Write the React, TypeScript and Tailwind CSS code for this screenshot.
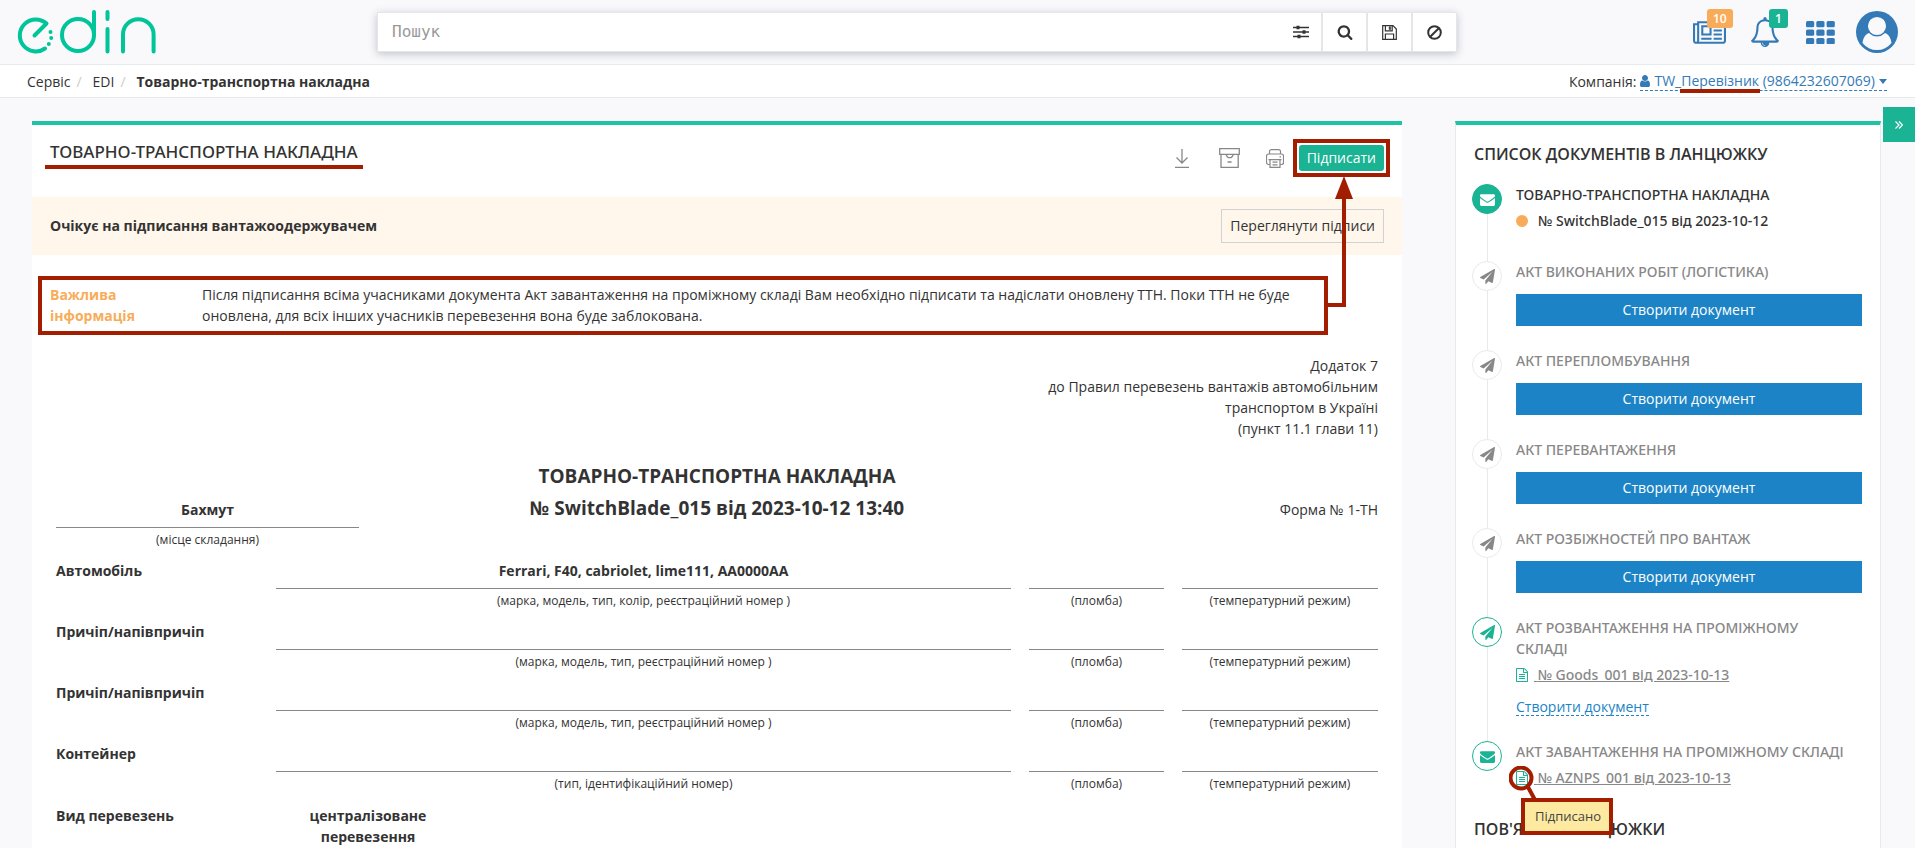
import React from "react";
import type { ReactNode } from "react";

type IconProps = { className?: string };

const Fa = ({ d, box = "0 0 1792 1792", className = "" }: IconProps & { d: string; box?: string }) => (
  <svg viewBox={box} className={className} fill="currentColor" aria-hidden="true">
    <path d={d} />
  </svg>
);

const P = {
  bell: "M912 1696q0-16-16-16-59 0-101.5-42.5t-42.5-101.5q0-16-16-16t-16 16q0 73 51.5 124.5t124.5 51.5q16 0 16-16zm-666-288h1300q-266-300-266-832 0-51-24-105t-69-103-121.5-80.5-169.5-31.5-169.5 31.5-121.5 80.5-69 103-24 105q0 532-266 832zm1482 0q0 52-38 90t-90 38h-448q0 106-75 181t-181 75-181-75-75-181h-448q-52 0-90-38t-38-90q50-42 91-88t85-119.5 74.5-158.5 50-206 19.5-260q0-152 117-282.5t307-158.5q-8-19-8-39 0-40 28-68t68-28 68 28 28 68q0 20-8 39 190 28 307 158.5t117 282.5q0 139 19.5 260t50 206 74.5 158.5 85 119.5 91 88z",
  news: "M1024 512h-384v384h384v-384zm128 640v128h-640v-128h640zm0-768v640h-640v-640h640zm640 768v128h-512v-128h512zm0-256v128h-512v-128h512zm0-256v128h-512v-128h512zm0-256v128h-512v-128h512zm-1536 960v-960h-128v960q0 26 19 45t45 19 45-19 19-45zm1664 0v-1088h-1536v1088q0 33-11 64h1483q26 0 45-19t19-45zm128-1216v1216q0 80-56 136t-136 56h-1664q-80 0-136-56t-56-136v-1088h256v-128h1792z",
  file: "M1596 380q28 28 48 76t20 88v1152q0 40-28 68t-68 28h-1344q-40 0-68-28t-28-68v-1600q0-40 28-68t68-28h896q40 0 88 20t76 48zm-444-244v376h376q-10-29-22-41l-313-313q-12-12-41-22zm384 1528v-1024h-416q-40 0-68-28t-28-68v-416h-768v1536h1280zm-1024-864q0-14 9-23t23-9h704q14 0 23 9t9 23v64q0 14-9 23t-23 9h-704q-14 0-23-9t-9-23v-64zm736 224q14 0 23 9t9 23v64q0 14-9 23t-23 9h-704q-14 0-23-9t-9-23v-64q0-14 9-23t23-9h704zm0 256q14 0 23 9t9 23v64q0 14-9 23t-23 9h-704q-14 0-23-9t-9-23v-64q0-14 9-23t23-9h704z",
  plane: "M1764 11q33 24 27 64l-256 1536q-5 29-32 45-14 8-31 8-11 0-24-5l-453-185-242 295q-18 23-49 23-13 0-22-4-19-7-30.5-23.5t-11.5-36.5v-349l864-1059-1069 925-395-162q-37-14-40-55-2-40 32-59l1664-960q15-9 32-9 20 0 36 11z",
  mail: "M1792 710v794q0 66-47 113t-113 47h-1472q-66 0-113-47t-47-113v-794q44 49 101 87 362 246 497 345 57 42 92.5 65.5t94.5 48 110 24.5h2q51 0 110-24.5t94.5-48 92.5-65.5q170-123 498-345 57-39 100-87zm0-294q0 79-49 151t-122 123q-376 261-468 325-10 7-42.5 31t-54 38.5-52 32.5-57.5 27-50 9h-2q-23 0-50-9t-57.5-27-52-32.5-54-38.5-42.5-31q-91-64-262-182.5t-205-142.5q-62-42-117-115.5t-55-136.5q0-78 41.5-130t118.5-52h1472q65 0 112.5 47t47.5 113z",
  user: "M1536 1399q0 109-62.5 187t-150.5 78h-854q-88 0-150.5-78t-62.5-187q0-85 8.5-160.5t31.5-152 58.5-131 94-89 134.5-34.5q131 128 313 128t313-128q76 0 134.5 34.5t94 89 58.5 131 31.5 152 8.5 160.5zm-256-887q0 159-112.5 271.5t-271.5 112.5-271.5-112.5-112.5-271.5 112.5-271.5 271.5-112.5 271.5 112.5 112.5 271.5z",
  search: "M1216 832q0-185-131.5-316.5t-316.5-131.5-316.5 131.5-131.5 316.5 131.5 316.5 316.5 131.5 316.5-131.5 131.5-316.5zm512 832q0 52-38 90t-90 38q-54 0-90-38l-343-342q-179 124-399 124-143 0-273.5-55.5t-225-150-150-225-55.5-273.5 55.5-273.5 150-225 225-150 273.5-55.5 273.5 55.5 225 150 150 225 55.5 273.5q0 220-124 399l343 343q37 37 37 90z",
};

const Logo = () => (
  <svg viewBox="0 0 140 46" className="h-[46px] w-[140px]" fill="none" stroke="#00c49a" strokeWidth="4" strokeLinecap="round" role="img" aria-label="edin">
    <path d="M17.5 26.5 L29.5 14.5 A16 16 0 1 0 28 39.5" strokeLinejoin="round" />
    <circle cx="61" cy="26" r="16" />
    <path d="M77 26V3M90.500 3v7M90.500 20v22.500M106 42.500V25.500a15.300 15.300 0 0 1 30.600 0V42.500" />
    <g fill="#00c49a" stroke="none">
      <circle cx="33.500" cy="23" r="2" />
      <circle cx="34.200" cy="29" r="2" />
      <circle cx="31.800" cy="35" r="2" />
    </g>
  </svg>
);

const Tune = () => (
  <svg viewBox="0 0 16 14" className="h-[14px] w-4" stroke="currentColor" strokeWidth="1.3" fill="none" aria-hidden="true">
    <path d="M0 2.500h16M0 7h16M0 11.500h16" />
    <path d="M5 .700v3.600M11 5.200v3.600M6 9.700v3.600" strokeWidth="3" />
  </svg>
);
const Floppy = () => (
  <svg viewBox="0 0 15 15" className="size-[15px]" stroke="currentColor" strokeWidth="1.200" fill="none" aria-hidden="true">
    <path d="M.7.7h10.300L14.300 4v10.300H.7zM3.400 14V9h8.200v5M3.400.8v5h6.800v-5" />
    <path d="M7.200 1.800h1.400v2.800H7.200z" fill="currentColor" strokeWidth=".6" />
  </svg>
);
const Ban = () => (
  <svg viewBox="0 0 15 15" className="size-[15px]" stroke="currentColor" strokeWidth="2" fill="none" aria-hidden="true">
    <circle cx="7.500" cy="7.500" r="6.300" />
    <path d="M3.200 11.800L11.800 3.200" />
  </svg>
);
const Grid = () => (
  <svg viewBox="0 0 29 23" className="h-[23px] w-[29px]" fill="currentColor" aria-hidden="true">
    {[0, 8.5, 17].map((y) =>
      [0, 10.3, 20.6].map((x) => <rect key={`${x}-${y}`} x={x} y={y} width="8.200" height="6.200" rx="1.500" />)
    )}
  </svg>
);
const Avatar = () => (
  <svg viewBox="0 0 42 42" className="size-[42px]" aria-hidden="true">
    <circle cx="21" cy="21" r="21" fill="#337ab7" />
    <path d="M6.500 32C7.200 26.500 9.500 23 14 21.500a11 11 0 0 0 14 0c4.500 1.500 6.800 5 7.500 10.500A18.500 18.500 0 0 1 6.500 32z" fill="#f9f9fb" />
    <circle cx="21" cy="15" r="9.800" fill="#f9f9fb" stroke="#337ab7" strokeWidth="1.500" />
  </svg>
);
const Download = () => (
  <svg viewBox="0 0 14 19" className="h-[19px] w-[14px]" stroke="currentColor" fill="none" aria-hidden="true">
    <path d="M7 0v14M1.500 8.500L7 14l5.500-5.500M0 18.300h14" strokeWidth="1.300" />
  </svg>
);
const Archive = () => (
  <svg viewBox="0 0 21 20" className="h-5 w-[21px]" stroke="currentColor" fill="none" strokeWidth="1.300" aria-hidden="true">
    <path d="M.7.7h19.600v5.600H.7zM2 6.300v13h17.200v-13M7.500 6.500v1.200l1.700 1.900h3l1.700-1.900V6.500M8.600 14h4" />
  </svg>
);
const Printer = () => (
  <svg viewBox="0 0 18 19" className="h-[19px] w-[18px]" stroke="currentColor" fill="none" strokeWidth="1.200" aria-hidden="true">
    <path d="M3.500 5V2.600a2 2 0 0 1 2-2h7a2 2 0 0 1 2 2V5M4 15.500H2.500a2 2 0 0 1-2-2V7a2 2 0 0 1 2-2h13a2 2 0 0 1 2 2v6.500a2 2 0 0 1-2 2H14M4 10.600h10v7.800H4zM2.500 10.600h13M6.500 13.200h5M6.500 15.800h5M13.500 7.800h1.500" />
  </svg>
);

const SearchButton = ({ label, children }: { label: string; children: ReactNode }) => (
  <button type="button" aria-label={label} className="flex w-[45px] items-center justify-center border-l-2 border-[#e5e6e7]">
    {children}
  </button>
);

const Header = () => (
  <header className="flex h-[65px] items-center border-b border-[#e7eaec] px-[17px]">
    <a href="#home" className="w-[360px] shrink-0">
      <Logo />
    </a>
    <form className="flex h-10 w-[1080px] min-w-0 border border-[#e5e6e7] bg-white shadow-[0_2px_8px_rgba(60,70,110,0.3)]">
      <input
        type="search"
        aria-label="Пошук"
        placeholder="Пошук"
        className="min-w-0 flex-1 px-[14px] font-['DejaVu_Sans_Mono',monospace] text-base outline-none placeholder:text-[#999]"
      />
      <button type="button" aria-label="Фільтри" className="flex w-10 items-center justify-center">
        <Tune />
      </button>
      <SearchButton label="Знайти">
        <Fa d={P.search} className="size-4" />
      </SearchButton>
      <SearchButton label="Зберегти">
        <Floppy />
      </SearchButton>
      <SearchButton label="Очистити">
        <Ban />
      </SearchButton>
    </form>
    <nav className="ml-auto flex items-center text-[#337ab7]">
      <a href="#news" aria-label="Новини" className="relative">
        <Fa d={P.news} box="0 128 2048 1408" className="h-[23px] w-[33px]" />
        <span className="absolute -top-[12px] left-[14px] rounded-[3px] bg-[#f8ac59] px-[6px] text-xs leading-[19px] font-semibold text-white">10</span>
      </a>
      <a href="#alerts" aria-label="Сповіщення" className="relative ml-6">
        <Fa d={P.bell} className="size-[30px]" />
        <span className="absolute -top-[8px] left-[19px] rounded-[3px] bg-[#1ab394] px-[6px] text-xs leading-[19px] font-semibold text-white">1</span>
      </a>
      <a href="#apps" aria-label="Сервіси" className="ml-[26px]">
        <Grid />
      </a>
      <a href="#profile" aria-label="Профіль" className="ml-[21px]">
        <Avatar />
      </a>
    </nav>
  </header>
);

const Breadcrumbs = () => (
  <div className="flex h-[33px] items-center justify-between border-b border-[#e7eaec] bg-white pt-px pr-7 pl-[27px]">
    <nav className="flex items-center">
      <a href="#service">Сервіс</a>
      <span className="w-[22px] pl-[6px] text-[#ccc]">/</span>
      <a href="#edi">EDI</a>
      <span className="w-[22px] pl-[6px] text-[#ccc]">/</span>
      <strong>Товарно-транспортна накладна</strong>
    </nav>
    <div className="flex items-center gap-1">
      <span>Компанія:</span>
      <a href="#company" className="flex items-center border-b border-dashed border-[#337ab7] leading-[18px] text-[#337ab7]">
        <Fa d={P.user} box="256 128 1280 1536" className="mr-1 h-3 w-[10px]" />
        TW_
        <span className="relative">
          Перевізник
          <span className="absolute -inset-x-px -bottom-[3px] h-1 bg-[#a31e00]" />
        </span>
        &nbsp;(9864232607069)
        <svg viewBox="0 0 8 5" className="ml-1 h-[5px] w-2" fill="currentColor" aria-hidden="true">
          <path d="M0 0h8L4 5z" />
        </svg>
      </a>
    </div>
  </div>
);

const Caption = ({ children }: { children: ReactNode }) => <p className="pt-[3px] text-center text-xs leading-[18px]">{children}</p>;

const Line = ({ value, caption }: { value?: string; caption: string }) => (
  <div>
    <p className="h-8 border-b border-[#888] pt-[3px] text-center font-bold leading-[21px]">{value}</p>
    <Caption>{caption}</Caption>
  </div>
);

const vehicles = [
  { label: "Автомобіль", value: "Ferrari, F40, cabriolet, lime111, AA0000AA", caption: "(марка, модель, тип, колір, реєстраційний номер )" },
  { label: "Причіп/напівпричіп", caption: "(марка, модель, тип, реєстраційний номер )" },
  { label: "Причіп/напівпричіп", caption: "(марка, модель, тип, реєстраційний номер )" },
  { label: "Контейнер", caption: "(тип, ідентифікаційний номер)" },
];

const Waybill = () => (
  <div className="px-6 pt-5 pb-8">
    <p className="ml-auto w-[345px] text-right leading-[21px]">
      Додаток 7<br />
      до Правил перевезень вантажів автомобільним транспортом в Україні
      <br />
      (пункт 11.1 глави 11)
    </p>
    <div className="mt-[21px] grid grid-cols-[303px_1fr_303px] gap-[18px]">
      <div className="pt-[34px]">
        <p className="h-[34px] border-b border-[#888] pt-[5px] text-center font-bold leading-[21px]">Бахмут</p>
        <Caption>(місце складання)</Caption>
      </div>
      <h2 className="text-center text-[19px] leading-8 font-bold">
        ТОВАРНО-ТРАНСПОРТНА НАКЛАДНА
        <br />№ SwitchBlade_015 від 2023-10-12 13:40
      </h2>
      <p className="pt-[39px] text-right leading-[21px]">Форма № 1-ТН</p>
    </div>
    <div className="mt-2 flex flex-col gap-2">
      {vehicles.map((v, i) => (
        <div key={i} className="grid grid-cols-[202px_1fr_135px_196px] gap-[18px]">
          <p className="pt-[3px] font-bold leading-[21px]">{v.label}</p>
          <Line value={v.value} caption={v.caption} />
          <Line caption="(пломба)" />
          <Line caption="(температурний режим)" />
        </div>
      ))}
      <div className="grid grid-cols-[202px_184px] gap-[18px] pt-1 font-bold leading-[21px]">
        <p>Вид перевезень</p>
        <p className="text-center">централізоване перевезення</p>
      </div>
    </div>
  </div>
);

const MainPanel = () => (
  <main className="relative min-w-0 flex-1 border-t-4 border-[#20c3a3] bg-white">
    <div className="flex h-[72px] items-start justify-between px-[18px]">
      <h1 className="relative pt-[15px] font-['Noto_Sans',sans-serif] text-[17px] leading-6 font-medium">
        ТОВАРНО-ТРАНСПОРТНА НАКЛАДНА
        <span className="absolute -inset-x-[5px] -bottom-[5px] h-1 bg-[#a31e00]" />
      </h1>
      <div className="flex items-center pt-5 text-[#888]">
        <button type="button" aria-label="Завантажити" className="mr-[30px]">
          <Download />
        </button>
        <button type="button" aria-label="Архівувати" className="mr-[26px]">
          <Archive />
        </button>
        <button type="button" aria-label="Друкувати" className="mr-[15px]">
          <Printer />
        </button>
        <button type="button" className="relative h-[26px] rounded-[3px] bg-[#1ab394] px-2 text-white">
          Підписати
          <span className="absolute -inset-[6px] border-4 border-[#a31e00]" />
        </button>
      </div>
    </div>
    <div className="flex h-[58px] items-center justify-between bg-[#fff6ec] px-[18px]">
      <strong>Очікує на підписання вантажоодержувачем</strong>
      <button type="button" className="h-[34px] border border-[#d2d2d2] px-2">
        Переглянути підписи
      </button>
    </div>
    <section className="mt-[21px] mr-[74px] ml-[6px] flex border-4 border-[#a31e00] pt-1 pb-[5px] pl-2 leading-[21px]">
      <strong className="w-[152px] shrink-0 pr-10 text-[#f8ac59]">Важлива інформація</strong>
      <p>
        Після підписання всіма учасниками документа Акт завантаження на проміжному складі Вам необхідно підписати та надіслати оновлену ТТН. Поки ТТН не
        буде оновлена, для всіх інших учасників перевезення вона буде заблокована.
      </p>
    </section>
    <svg viewBox="0 0 26 132" className="pointer-events-none absolute top-[51px] right-[49px] h-[132px] w-[26px]" aria-hidden="true">
      <path d="M0 129H17V20" fill="none" stroke="#a31e00" strokeWidth="4" />
      <path d="M17 0L26 23H8z" fill="#a31e00" />
    </svg>
    <Waybill />
  </main>
);

type Doc = {
  title: string;
  icon: "mail" | "plane";
  tone: "solid" | "muted" | "active";
  children: ReactNode;
};

const toneClass = {
  solid: "border-[#1ab394] bg-[#1ab394] text-white",
  muted: "border-[#e7eaec] bg-white text-[#888]",
  active: "border-[#1ab394] bg-white text-[#1ab394]",
};

const CreateButton = () => (
  <button type="button" className="mt-3 mb-6 block h-8 w-full bg-[#1c84c6] text-center text-white">
    Створити документ
  </button>
);

const DocLink = ({ children, note }: { children: ReactNode; note?: boolean }) => (
  <div className="mt-[5px] flex h-[22px] items-center font-['Noto_Sans',sans-serif] font-medium text-[#888]">
    <span className="relative mr-[6px]">
      <Fa d={P.file} box="128 0 1536 1792" className="h-[14px] w-3 text-[#1ab394]" />
      {note && (
        <span className="absolute -top-[5px] -left-[7px] h-0 w-0">
          <svg viewBox="0 0 40 40" className="h-10 w-10" fill="none" stroke="#a31e00" strokeWidth="4" aria-hidden="true">
            <circle cx="12" cy="12" r="10.500" />
            <path d="M19 21L26 34" />
          </svg>
          <span className="absolute top-8 left-3 border-4 border-[#a31e00] bg-[#fdeaa0] pr-2 pl-[10px] font-['Open_Sans',sans-serif] text-[13px] leading-[29px] font-normal text-[#444]">
            Підписано
          </span>
        </span>
      )}
    </span>
    <a href="#doc" className="whitespace-pre underline">
      {" "}
      {children}
    </a>
  </div>
);

const docs: Doc[] = [
  {
    title: "ТОВАРНО-ТРАНСПОРТНА НАКЛАДНА",
    icon: "mail",
    tone: "solid",
    children: (
      <p className="mt-[5px] mb-[29px] flex h-[22px] items-center font-['Noto_Sans',sans-serif] font-medium">
        <span className="mr-[10px] size-3 rounded-full bg-[#f8ac59]" />№ SwitchBlade_015 від 2023-10-12
      </p>
    ),
  },
  { title: "АКТ ВИКОНАНИХ РОБІТ (ЛОГІСТИКА)", icon: "plane", tone: "muted", children: <CreateButton /> },
  { title: "АКТ ПЕРЕПЛОМБУВАННЯ", icon: "plane", tone: "muted", children: <CreateButton /> },
  { title: "АКТ ПЕРЕВАНТАЖЕННЯ", icon: "plane", tone: "muted", children: <CreateButton /> },
  { title: "АКТ РОЗБІЖНОСТЕЙ ПРО ВАНТАЖ", icon: "plane", tone: "muted", children: <CreateButton /> },
  {
    title: "АКТ РОЗВАНТАЖЕННЯ НА ПРОМІЖНОМУ СКЛАДІ",
    icon: "plane",
    tone: "active",
    children: (
      <>
        <DocLink>№ Goods_001 від 2023-10-13</DocLink>
        <a href="#create" className="mt-[12px] mb-[25px] inline-block border-b border-dashed border-[#1c84c6] leading-[17px] text-[#1c84c6]">
          Створити документ
        </a>
      </>
    ),
  },
  { title: "АКТ ЗАВАНТАЖЕННЯ НА ПРОМІЖНОМУ СКЛАДІ", icon: "mail", tone: "active", children: <DocLink note>№ AZNPS_001 від 2023-10-13</DocLink> },
];

const SidePanel = () => (
  <aside className="w-[426px] shrink-0 border-x border-t-4 border-[#e7eaec] border-t-[#20c3a3] bg-white pr-[18px] pb-8 pl-4">
    <h2 className="pt-[17px] pl-[2px] text-base leading-6 font-semibold">СПИСОК ДОКУМЕНТІВ В ЛАНЦЮЖКУ</h2>
    <ol className="pt-[18px]">
      {docs.map((doc, i) => (
        <li key={doc.title} className="flex gap-[14px]">
          <div className="flex flex-col items-center">
            <span className={`flex size-[30px] shrink-0 items-center justify-center rounded-full border ${toneClass[doc.tone]}`}>
              <Fa d={P[doc.icon]} className="size-[15px]" />
            </span>
            {i < docs.length - 1 && <span className="w-px flex-1 bg-[#e7eaec]" />}
          </div>
          <div className="min-w-0 flex-1">
            <h3 className={`pr-3 font-['Noto_Sans',sans-serif] font-medium leading-[21px] ${i === 0 ? "" : "text-[#888]"}`}>{doc.title}</h3>
            {doc.children}
          </div>
        </li>
      ))}
    </ol>
    <h2 className="mt-[28px] pl-[2px] text-base leading-6 font-semibold">ПОВ'ЯЗАНІ ЛАНЦЮЖКИ</h2>
  </aside>
);

export default function App() {
  return (
    <div className="relative h-screen overflow-hidden bg-[#f9f9fb] font-['Open_Sans',sans-serif] text-sm text-[#333]">
      <Header />
      <Breadcrumbs />
      <div className="flex items-start gap-[53px] pt-[23px] pr-[34px] pl-8">
        <MainPanel />
        <SidePanel />
      </div>
      <button type="button" aria-label="Згорнути панель" className="absolute top-[107px] right-0 flex h-[35px] w-8 items-center justify-center bg-[#1ab394] text-white">
        <svg viewBox="0 0 8 8" className="size-2" fill="none" stroke="currentColor" strokeWidth="1.200" aria-hidden="true">
          <path d="M.5.5L4 4 .5 7.500M4 .5L7.500 4 4 7.500" />
        </svg>
      </button>
    </div>
  );
}
